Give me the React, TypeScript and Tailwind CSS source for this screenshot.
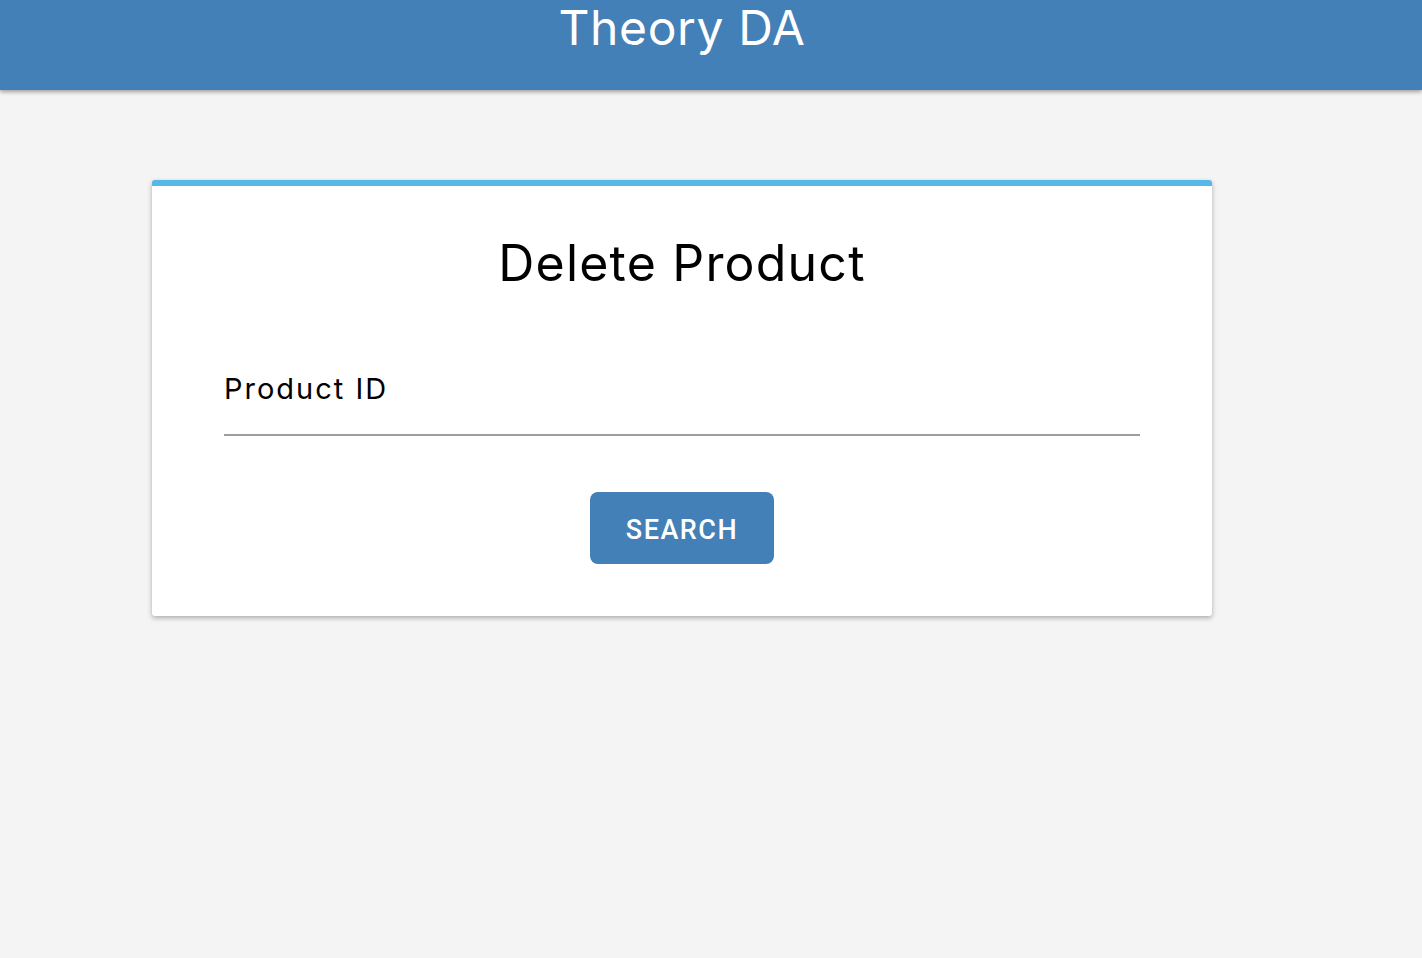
export default function App() {
  return (
    <div className="min-h-screen bg-[#f4f4f4]" style={{ fontFamily: 'Inter, "Noto Sans", sans-serif' }}>
      {/* Header */}
      <header className="h-[90px] bg-[#4380b7] shadow-[0_2px_4px_rgba(0,0,0,0.35)] pl-[152px]">
        <div className="w-[1060px] flex justify-center">
          <h1 className="text-[48px] leading-none text-white pt-[4px] tracking-[0.6px]">Theory DA</h1>
        </div>
      </header>

      {/* Card */}
      <main className="pt-[90px] pl-[152px]">
        <div className="w-[1060px] bg-white rounded-[3px] border-t-[6px] border-[#56b8e6] shadow-[0_2px_5px_rgba(0,0,0,0.3)] pt-[52px] pb-[52px] px-[72px]">
          <h2 className="text-center text-[50px] leading-none text-black tracking-[1.2px]">Delete Product</h2>
          <div className="mt-[86px] border-b-2 border-[#9e9e9e] pb-[31px]">
            <label className="block text-[29px] leading-none text-black tracking-[2px]">Product ID</label>
          </div>
          <div className="mt-[56px] flex justify-center">
            <button className="w-[184px] h-[72px] pt-[5px] rounded-[8px] bg-[#4380b7] text-white text-[27px] font-medium tracking-[1.5px]" style={{ fontFamily: 'Roboto, sans-serif' }}>
              SEARCH
            </button>
          </div>
        </div>
      </main>
    </div>
  )
}
